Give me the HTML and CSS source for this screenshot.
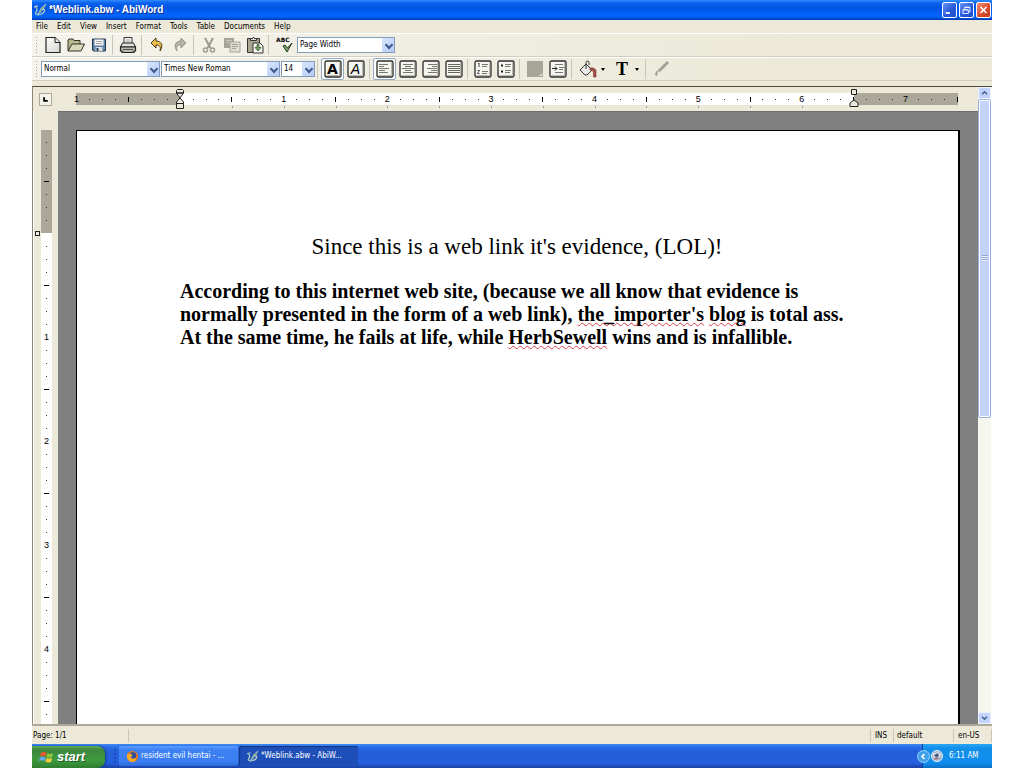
FILE: index.html
```html
<!DOCTYPE html>
<html lang="en">
<head>
<meta charset="utf-8">
<title>*Weblink.abw - AbiWord</title>
<link rel="stylesheet" href="styles.css">
</head>
<body>
<svg width="0" height="0" class="defs" aria-hidden="true">
  <defs>
    <linearGradient id="paper" x1="0" y1="0" x2="1" y2="1"><stop offset="0" stop-color="#fff"/><stop offset="1" stop-color="#d4d4d0"/></linearGradient>
    <symbol id="abi" viewBox="0 0 14 14"><path d="M1 4l4-1M3 4q2 3 0 5t3 3" fill="none" stroke="#a9c4c8" stroke-width="1.300"/><path d="M5 11l3-6 5-4-2 4-4 5z" fill="#6f9c8c" stroke="#c3d7cf" stroke-width=".6"/><path d="M9 6q4 0 2 3-2 3-5 2" fill="none" stroke="#c9d8c0" stroke-width="1.200"/></symbol>
    <symbol id="frame" viewBox="0 0 18 18"><rect x="1" y="1" width="16" height="16" rx="1.5" fill="#f6f6f0" stroke="#2c2c2c" stroke-width="1.3"/><path d="M2.5 15.5h13v-13" fill="none" stroke="#b8b8b0"/></symbol>
  </defs>
</svg>
<div class="window">
  <header class="titlebar">
    <svg class="app-icon"><use href="#abi"/></svg>
    <h1>*Weblink.abw - AbiWord</h1>
    <button class="win-btn" aria-label="Minimize"><svg viewBox="0 0 15 15"><path d="M3 11h5" stroke="#fff" stroke-width="2"/></svg></button>
    <button class="win-btn" aria-label="Restore"><svg viewBox="0 0 15 15"><path d="M5.500 6V4.500h6v5H10M3.500 7.500h6v4h-6zM3.500 7h6M5.500 4h6" fill="none" stroke="#dfe8ff" stroke-width="1.2"/></svg></button>
    <button class="win-btn close" aria-label="Close"><svg viewBox="0 0 15 15"><path d="M4 4l7 7M11 4l-7 7" stroke="#fff" stroke-width="1.8"/></svg></button>
  </header>

  <nav class="menubar">
    <button>File</button><button>Edit</button><button>View</button><button>Insert</button><button>Format</button><button>Tools</button><button>Table</button><button>Documents</button><button>Help</button>
  </nav>

  <div class="toolbar">
    <span class="grip"></span>
    <button aria-label="New"><svg viewBox="0 0 18 18"><path d="M2 1.500h9l5 5v10H2z" fill="url(#paper)" stroke="#222" stroke-width="1.2"/><path d="M11 1.500v5h5" fill="#e8e8e4" stroke="#222"/></svg></button>
    <button aria-label="Open"><svg viewBox="0 0 18 18"><path d="M1 15V4l1-1h4l1 1.500h6V8" fill="#b7b78d" stroke="#33332a"/><path d="M1 15L5 8h12.500L14 15z" fill="#dad9b8" stroke="#33332a"/></svg></button>
    <button aria-label="Save"><svg viewBox="0 0 18 18"><path d="M2.500 3h13v12h-12l-1-1z" fill="#5d82a8" stroke="#26384e"/><path d="M4.500 3.500h9v6h-9z" fill="#f4f4f4"/><path d="M6 5.500h6M6 7.500h6" stroke="#aaa"/><path d="M5.500 11h7v4h-7z" fill="#d9dee3"/><path d="M6.500 12h2v3h-2z" fill="#28394d"/></svg></button>
    <span class="sep"></span>
    <button aria-label="Print"><svg viewBox="0 0 18 18"><path d="M5 8V1.500h8V8" fill="#fff" stroke="#333"/><path d="M6.500 4h5M6.500 6h5" stroke="#999"/><path d="M1.500 11l2-4h11l2 4z" fill="#e4e3da" stroke="#222"/><path d="M1.500 11h15v4h-1.500v1.500H3V15H1.500z" fill="#b9b8ae" stroke="#222" stroke-width="1.200"/><path d="M4 13.500h10" stroke="#55554d"/></svg></button>
    <span class="sep"></span>
    <button aria-label="Undo"><svg viewBox="0 0 18 18"><path d="M3 7l5-5v3c5 0 8 4 4 10 1-4 0-6-4-6v3z" fill="#e9c04d" stroke="#4e3910"/></svg></button>
    <button aria-label="Redo"><svg viewBox="0 0 18 18"><path d="M15 7l-5-5v3C5 5 2 9 6 15 5 11 6 9 10 9v3z" fill="#b4b3aa" stroke="#96958c"/></svg></button>
    <span class="sep"></span>
    <button aria-label="Cut"><svg viewBox="0 0 18 18"><path d="M5 2l5.500 10M13 2L7.500 12" stroke="#9b9a90" stroke-width="2"/><circle cx="5.500" cy="14" r="2" fill="none" stroke="#9b9a90" stroke-width="1.400"/><circle cx="12.500" cy="14" r="2" fill="none" stroke="#9b9a90" stroke-width="1.400"/></svg></button>
    <button aria-label="Copy"><svg viewBox="0 0 18 18"><path d="M1 2h10v10H1z" fill="#a5a499"/><path d="M3 4.500h6M3 6.500h6" stroke="#c9c8bd"/><path d="M7 6h10v10H7z" fill="#dfddcf" stroke="#a5a499"/><path d="M9 8.500h6M9 10.500h6M9 12.500h4" stroke="#a5a499"/></svg></button>
    <button aria-label="Paste"><svg viewBox="0 0 18 18"><path d="M1.500 2.500h12v14h-12z" fill="#aaa791" stroke="#333"/><path d="M4.500 4.500V2.500h2l1-1.500 1 1.500h2v2z" fill="#ddd" stroke="#333"/><path d="M7 7h7l3 3v7H7z" fill="#f4f6ec" stroke="#333"/><path d="M11 8.500h2v3h2l-3 3.500-3-3.500h2z" fill="#76a263" stroke="#294c25" stroke-width=".7"/></svg></button>
    <span class="sep"></span>
    <button class="spell" aria-label="Spelling"><span>ABC</span><svg viewBox="0 0 18 18"><path d="M8 10l4 6 5-9-4.500 5L10 9z" fill="#78a568" stroke="#243c21"/></svg></button>
    <span class="combo zoom"><select aria-label="Zoom"><option>Page Width</option></select><i></i></span>
  </div>

  <div class="toolbar second">
    <span class="grip"></span>
    <span class="combos">
      <span class="combo wide"><select aria-label="Style"><option>Normal</option></select><i></i></span>
      <span class="combo wide"><select aria-label="Font"><option>Times New Roman</option></select><i></i></span>
      <span class="combo size"><select aria-label="Size"><option>14</option></select><i></i></span>
    </span>
    <span class="sep"></span>
    <button class="on boxed bold" aria-label="Bold"><svg viewBox="0 0 18 18"><use href="#frame"/></svg><b>A</b></button>
    <button class="boxed" aria-label="Italic"><svg viewBox="0 0 18 18"><use href="#frame"/></svg><em>A</em></button>
    <span class="sep"></span>
    <button class="on" aria-label="Align left"><svg viewBox="0 0 18 18"><use href="#frame"/><path d="M3 4.500h9M3 6.500h5M3 8.500h10M3 10.500h6M3 12.500h9" stroke="#77776f"/></svg></button>
    <button aria-label="Align center"><svg viewBox="0 0 18 18"><use href="#frame"/><path d="M4 4.500h10M6 6.500h6M3 8.500h12M6 10.500h6M4 12.500h10" stroke="#77776f"/></svg></button>
    <button aria-label="Align right"><svg viewBox="0 0 18 18"><use href="#frame"/><path d="M6 4.500h9M10 6.500h5M5 8.500h10M9 10.500h6M6 12.500h9" stroke="#77776f"/></svg></button>
    <button aria-label="Justify"><svg viewBox="0 0 18 18"><use href="#frame"/><path d="M3 4.500h12M3 6.500h12M3 8.500h12M3 10.500h12M3 12.500h12" stroke="#66665f"/></svg></button>
    <span class="sep"></span>
    <button aria-label="Numbered list"><svg viewBox="0 0 18 18"><use href="#frame"/><path d="M4 4l1-1v4M3.500 10.500h2l-2 3h2" fill="none" stroke="#222" stroke-width=".8"/><path d="M8 4.500h6M8 6.500h5M8 11.500h6M8 13.500h5" stroke="#77776f"/></svg></button>
    <button aria-label="Bulleted list"><svg viewBox="0 0 18 18"><use href="#frame"/><path d="M4 5.500h2M4 11.500h2" stroke="#222" stroke-width="2"/><path d="M8 4.500h6M8 6.500h5M8 10.500h6M8 12.500h5" stroke="#77776f"/></svg></button>
    <span class="sep"></span>
    <button aria-label="Decrease indent"><svg viewBox="0 0 18 18"><path d="M1 1h16v16H1z" fill="#a7a597"/><path d="M13 15.500h3v-2" fill="none" stroke="#e6e4d6"/></svg></button>
    <button aria-label="Increase indent"><svg viewBox="0 0 18 18"><use href="#frame"/><path d="M3 8.500h5M6 6.500l2 2-2 2" fill="none" stroke="#222"/><path d="M6 4.500h8M10 7.500h5M10 9.500h4M6 12.500h8" stroke="#77776f"/></svg></button>
    <span class="sep"></span>
    <button class="split" aria-label="Highlight color"><svg viewBox="0 0 18 18"><path d="M1 10l6-6 6 6-5 5H6z" fill="#e9eaec" stroke="#333"/><path d="M7 9V2.500a1.500 1.500 0 0 1 3 0V5" fill="none" stroke="#333"/><path d="M11 8q4-1 6 2v7h-2.500v-5q-1-2-3.500-2z" fill="#a8504c" stroke="#7a2f2c" stroke-width=".6"/></svg><i></i></button>
    <button class="split" aria-label="Text color"><strong>T</strong><i></i></button>
    <span class="sep"></span>
    <button aria-label="Style painter"><svg viewBox="0 0 18 18"><path d="M16 2L7 11" stroke="#a3a297" stroke-width="3"/><path d="M8 10q-4 0-5 4l1 2 2-1q-2-2 2-5z" fill="#a3a297"/></svg></button>
  </div>

  <main class="work">
    <div class="main">
      <div class="hruler">
        <div class="corner"><span class="tab"><svg viewBox="0 0 12 12"><path d="M4.500 3.500v4h4" fill="none" stroke="#000" stroke-width="2"/></svg></span></div>
        <div class="track">
          <span class="zone margin"></span>
          <span class="zone text">
            <svg class="mark left" viewBox="0 0 10 22"><path d="M1.500 5V2.500l1-1h5l1 1V5zM1.500 5l3.500 5 3.500-5zM5 10l-3.500 4v1.500h7V14zM1.500 15.500h7v5h-7z" fill="#eceadb" stroke="#222"/></svg>
            <svg class="mark right" viewBox="0 0 10 22"><path d="M2.500 1.500h5v5h-5zM5 12l-4 3v3.500h8V15z" fill="#eceadb" stroke="#222"/></svg>
          </span>
          <span class="zone margin"></span>
          <div class="ticks" id="hticks"></div>
        </div>
      </div>
      <div class="view">
        <div class="vruler">
          <div class="vtrack"><span class="vmargin"><span class="vmark"></span></span><div class="vticks" id="vticks"></div></div>
        </div>
        <div class="canvas">
          <article class="page">
            <h2>Since this is a web link it's evidence, (LOL)!</h2>
            <p>According to this internet web site, (because we all know that evidence is<br>normally presented in the form of a web link), <span class="typo">the_importer's</span> <span class="typo">blog</span> is total ass.<br>At the same time, he fails at life, while <span class="typo">HerbSewell</span> wins and is infallible.</p>
          </article>
        </div>
      </div>
    </div>
    <div class="scroll">
      <button aria-label="Scroll up"><svg viewBox="0 0 12 12"><path d="M3 7.500l3-3 3 3" fill="none" stroke="#43618f" stroke-width="1.800"/></svg></button>
      <div class="rail"><div class="thumb"><span></span></div></div>
      <button aria-label="Scroll down"><svg viewBox="0 0 12 12"><path d="M3 4.500l3 3 3-3" fill="none" stroke="#43618f" stroke-width="1.800"/></svg></button>
    </div>
  </main>

  <footer class="status">
    <span class="pages">Page: 1/1</span><span class="msg"></span><span class="ins">INS</span><span class="mode">default</span><span class="lang">en-US</span>
  </footer>

  <div class="taskbar">
    <button class="start"><svg viewBox="0 0 16 16"><path d="M2 3q3-2 6 0L7 7Q4 5.500 1 7z" fill="#e8592b"/><path d="M9 3.500q3 1.500 6 0l-1 4q-3 1.500-6 0z" fill="#8cc63f"/><path d="M1 8q3-1.500 6 0l-1 4q-3-2-6 0z" fill="#6aa5f0"/><path d="M8 8.500q3 1.500 6 0l-1 4q-3 1.500-6 0z" fill="#f8cc3c"/></svg>start</button>
    <span class="tgrip"></span>
    <button class="task"><svg viewBox="0 0 14 14"><circle cx="7" cy="7" r="6" fill="#e8761c"/><circle cx="7.500" cy="6" r="3.500" fill="#2d4f9c"/><path d="M1 4q2 1 3 0 3 0 3 2L5 8q3 3 6 0 0 4-4 5-5-1-6-5z" fill="#f9a928"/></svg>resident evil hentai - ...</button>
    <button class="task active"><svg viewBox="0 0 14 14"><use href="#abi"/></svg>*Weblink.abw - AbiW...</button>
    <div class="tray">
      <button class="chev" aria-label="Show hidden icons"><svg viewBox="0 0 13 13"><circle cx="6.500" cy="6.500" r="6" fill="#3fa0ea" stroke="#9dd2fb"/><path d="M7.500 4L5 6.500 7.500 9" fill="none" stroke="#fff" stroke-width="1.600"/></svg></button>
      <svg class="tray-icon" viewBox="0 0 14 14"><circle cx="7" cy="7" r="5.500" fill="#9db4d2" stroke="#eef4fb"/><path d="M3 5l5-2 3 3-3 4-4-1z" fill="#e9eef5"/><path d="M4 6l4-2 1 3-3 2z" fill="#47597a"/><path d="M4 10l5-1" stroke="#b34a45"/></svg>
      <time>6:11 AM</time>
    </div>
  </div>
</div>
<script src="ruler.js"></script>
</body>
</html>
```

FILE: ruler.js
```js
// Eighth-inch ruler ticks; zero sits one inch in from the page edge.
function fill(id, first, last) {
  const host = document.getElementById(id);
  for (let k = first; k <= last; k++) {
    const cell = document.createElement('span');
    const n = Math.abs(k - 8);
    if (n === 0) cell.className = 'none';
    else if (n % 8 === 0) cell.textContent = n / 8;
    else if (n % 4 === 0) cell.className = 'half';
    else cell.className = 'dot';
    if (n % 4 === 0 && k > 8 && k < 60) cell.className += ' notch';
    host.appendChild(cell);
  }
}
fill('hticks', 0, 68);
const track = document.querySelector('.vtrack');
fill('vticks', 1, Math.floor((track.clientHeight - 6) / 13));
```

FILE: styles.css
```css
* { box-sizing: border-box; }
body { margin: 0; background: #fff; font: 8px/12px "DejaVu Sans Condensed", "Liberation Sans", sans-serif; color: #000; }
button, select { font: inherit; color: inherit; border: 0; padding: 0; margin: 0; background: none; }
svg { display: block; flex: none; }
.defs { position: absolute; }
.window { height: 100vh; margin: 0 32px; display: flex; flex-direction: column; background: #ece9d8; overflow: hidden; }

.titlebar { height: 20px; flex: none; display: flex; align-items: center; gap: 2px; padding: 0 1px 0 1px;
  background: linear-gradient(#2f8bff, #0b62ef 3px, #0054e3 8px, #0264fb 15px, #0361f5 17px, #0138b0); }
.app-icon { width: 14px; height: 14px; }
.titlebar h1 { margin: 0; flex: 1; font: bold 10px/14px "Liberation Sans", sans-serif; color: #fff; text-shadow: 1px 1px #0a318f; }
.win-btn { width: 15px; height: 16px; border: 1px solid #fff; border-radius: 2px; background: linear-gradient(135deg, #6b95f3, #2355d8 60%, #1b50c8); }
.win-btn svg { width: 13px; height: 14px; }
.close { background: linear-gradient(135deg, #ee9278, #d9492a 60%, #c23b1c); }

.menubar { height: 14px; flex: none; display: flex; gap: 9px; padding: 0 4px; border-bottom: 1px solid #fff; align-items: center; }

.toolbar { height: 23px; flex: none; display: flex; align-items: center; border-bottom: 1px solid #d2cfbe; background: linear-gradient(90deg, #f4f3ec, #ece9d8 80%); }
.second { border-top: 1px solid #fff; height: 24px; }
.grip { width: 9px; height: 18px; flex: none; background: radial-gradient(circle, #aaa797 1px, transparent 1px) 3px 0 / 3px 3px repeat-y; }
.sep { width: 6px; height: 20px; flex: none; background: linear-gradient(#c9c6b5, #c9c6b5) 2px 0 / 1px 100% no-repeat; }
.toolbar button { width: 23px; height: 22px; flex: none; display: flex; align-items: center; justify-content: center; position: relative; }
.toolbar button svg { width: 18px; height: 18px; }
.toolbar .on { border: 1px solid #93a9c4; border-radius: 2px; background: #fcfcf8; }
.toolbar .split { width: 34px; gap: 4px; }
.split i { border: 2px solid transparent; border-top: 3px solid #000; border-bottom: 0; }
.split strong { width: 18px; font: bold 18px/20px "Liberation Serif", serif; }
.boxed b, .boxed em { position: absolute; inset: 0; font: italic 14px/22px "Liberation Sans", sans-serif; text-align: center; }
.boxed b { font: 900 14px/20px "DejaVu Sans", sans-serif; }
.spell span { position: absolute; left: 4px; top: 2px; font: bold 6px/7px "DejaVu Sans", sans-serif; }

.combos { display: flex; gap: 1px; }
.combo { position: relative; height: 16px; }
.combo select { appearance: none; width: 100%; height: 100%; padding: 0 2px; background: #fff; border: 1px solid #7f9db9; border-radius: 0; }
.combo i { position: absolute; top: 1px; right: 1px; bottom: 1px; width: 12px; border-radius: 1px; background: linear-gradient(135deg, #dbe6fe, #b3c9f6); pointer-events: none; }
.combo i::after { content: ""; position: absolute; left: 4px; top: 4px; width: 4px; height: 4px; border: solid #3f5a8c; border-width: 0 2px 2px 0; transform: rotate(45deg); }
.wide { width: 119px; }
.size { width: 34px; }
.zoom { width: 98px; margin-left: 2px; }

.work { flex: 1; min-height: 0; display: flex; margin-top: 5px; border-top: 1px solid #4b483c; border-left: 1px solid #8b8879; }
.main { flex: 1; min-width: 0; display: flex; flex-direction: column; }
.hruler { height: 24px; flex: none; display: flex; align-items: center; }
.corner { width: 25px; flex: none; padding-left: 6px; }
.tab { display: block; width: 13px; height: 13px; border: 1px solid #aca899; background: #f5f4ea; }
.tab svg { width: 11px; height: 11px; }
.track { flex: 1; height: 12px; margin: 0 20px 0 18px; display: flex; position: relative; }
.zone { flex: 8; background: #aca899; position: relative; }
.zone.text { flex: 52; background: #fff; }
.mark { position: absolute; z-index: 1; top: -5px; width: 10px; height: 22px; }
.mark.left { left: -5px; }
.mark.right { right: -5px; }
.ticks { position: absolute; inset: 0 -6px; display: flex; }
.ticks span { flex: 1 1 0; min-width: 0; display: flex; align-items: center; justify-content: center; position: relative; font: 9px/12px "Liberation Sans", sans-serif; }
.dot::before { content: ""; width: 1px; height: 1px; background: #333; }
.half::before { content: ""; width: 1px; height: 5px; background: #000; }
.ticks .notch::after { content: ""; position: absolute; left: 50%; top: 13px; width: 1px; height: 2px; background: #999; }

.view { flex: 1; min-height: 0; display: flex; }
.vruler { width: 25px; flex: none; padding: 19px 7px 0; border-left: 1px solid #fff; overflow: hidden; }
.vtrack { width: 11px; height: 100%; background: #fff; position: relative; }
.vmargin { display: block; height: 103px; background: #aca899; position: relative; }
.vmark { position: absolute; left: -6px; bottom: -3px; width: 5px; height: 5px; border: 1px solid #222; background: #eceadb; }
.vticks { position: absolute; inset: 6px 0 auto; }
.vticks span { height: 13px; display: flex; align-items: center; justify-content: center; font: 9px/13px "Liberation Sans", sans-serif; }
.vticks .half::before { width: 5px; height: 1px; }

.canvas { flex: 1; min-width: 0; background: #808080; padding: 18px 18px 0; border-top: 1px solid #6d6d6d; }
.page { height: 100%; background: #fff; border: 1px solid #000; border-width: 1px 2px 0 1px; padding: 102px 104px 0 103px; font-family: "Liberation Serif", serif; }
.page h2 { margin: 0 0 19px; font-size: 23px; line-height: 28px; font-weight: 400; text-align: center; white-space: nowrap; }
.page p { margin: 0; font-size: 20px; line-height: 23px; font-weight: 700; white-space: nowrap; }
.typo { text-decoration: underline wavy #d8414a 1px; text-underline-offset: 1px; text-decoration-skip-ink: none; }

.scroll { width: 14px; flex: none; display: flex; flex-direction: column; background: #f6f5ee; border-right: 1px solid #fff; }
.scroll button { height: 12px; border: 1px solid #eef3ff; border-radius: 2px; background: #c3d3fd; }
.scroll svg { width: 11px; height: 10px; }
.rail { flex: 1; }
.thumb { height: 52%; border: 1px solid #98b0dd; outline: 1px solid #fff; outline-offset: -2px; border-radius: 2px; background: #c3d3fd; display: grid; place-items: center; }
.thumb span { width: 6px; height: 6px; background: repeating-linear-gradient(#8ca5dc 0 1px, #eef3ff 1px 2px); }

.status { height: 20px; flex: none; display: flex; align-items: center; border-top: 2px solid #aca899; }
.status span { height: 13px; line-height: 13px; border-right: 1px solid #c9c6b5; padding-left: 1px; }
.pages { width: 97px; }
.msg { flex: 1; }
.status .ins { width: 23px; padding-left: 4px; }
.status .mode { width: 60px; padding-left: 3px; }
.status .lang { width: 38px; padding-left: 4px; }

.taskbar { height: 24px; flex: none; display: flex; align-items: center; color: #fff;
  background: linear-gradient(#3f8cf3, #2a6ce8 3px, #245edb 8px, #2460dd 19px, #1941a5); }
.start { width: 73px; height: 22px; align-self: flex-end; display: flex; align-items: center; gap: 3px; padding-left: 7px; border-radius: 0 8px 8px 0;
  background: linear-gradient(#5eac56, #3c873c 4px, #3e9b3e 14px, #2f7e2f); font: italic bold 13px/16px "Liberation Sans", sans-serif; text-shadow: 1px 1px #245b24; box-shadow: 1px 0 2px #14387e; }
.start svg { width: 15px; height: 15px; }
.tgrip { width: 14px; height: 16px; background: radial-gradient(circle, #1c49b5 1px, transparent 1px) 8px 0 / 4px 4px repeat-y; }
.task { width: 119px; height: 20px; margin-right: 1px; display: flex; align-items: center; gap: 2px; padding-left: 7px; border-radius: 2px; background: linear-gradient(#5a9bff, #3c81f3 4px, #3a7df0 16px, #2e69d8); white-space: nowrap; }
.task svg { width: 13px; height: 13px; }
.task.active { background: #1e4fb8; box-shadow: inset 1px 1px 1px #123683; }
.tray { height: 24px; margin-left: auto; width: 70px; display: flex; align-items: center; border-left: 1px solid #0b3f9a; background: linear-gradient(#2ba6f5, #1290e9 4px, #0f8dee 19px, #0b6fc4); }
.chev { margin-left: -6px; }
.chev svg { width: 13px; height: 13px; }
.tray-icon { width: 14px; height: 14px; }
.tray time { margin-left: 5px; }
```
